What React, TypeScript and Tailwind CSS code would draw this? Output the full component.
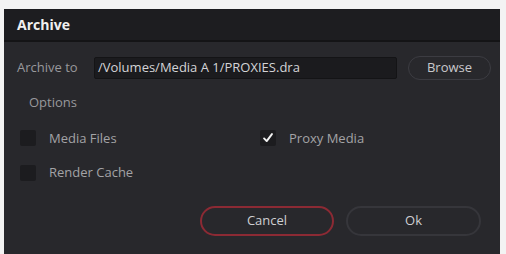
import { useState } from "react";

function Check({ checked, onChange, label }: { checked: boolean; onChange: () => void; label: string }) {
  return (
    <button type="button" onClick={onChange} className="flex items-center gap-[13px] text-[13px] text-[#a3a3a6]">
      <span className="flex h-[16px] w-[16px] items-center justify-center rounded-[2px] bg-[#1c1c1f]">
        {checked && (
          <svg viewBox="0 0 16 16" className="h-[14px] w-[14px]">
            <path d="M3.5 8.5 L6.5 11.5 L12.5 3.5" fill="none" stroke="#f2f2f2" strokeWidth="2.2" strokeLinecap="round" strokeLinejoin="round" />
          </svg>
        )}
      </span>
      <span>{label}</span>
    </button>
  );
}

export default function App() {
  const [media, setMedia] = useState(false);
  const [proxy, setProxy] = useState(true);
  const [cache, setCache] = useState(false);

  return (
    <div className="h-[254px] w-[506px] bg-[#f3f3f3] pl-[4px] pr-[6px] pt-[9px]" style={{ fontFamily: "'Open Sans', 'Noto Sans', sans-serif" }}>
      <div className="flex h-full flex-col bg-[#28282c]">
        {/* title bar */}
        <div className="flex h-[33px] items-center border-b-[2px] border-[#141416] bg-[#1d1d20] px-[13px]">
          <span className="text-[14px] font-bold text-[#f0f0f0]">Archive</span>
        </div>

        <div className="flex flex-1 flex-col pl-[13px] pr-[8px] pt-[14px]">
          <div className="flex items-center">
            <span className="w-[77px] shrink-0 text-[13px] text-[#98989c]">Archive to</span>
            <div className="flex h-[22px] w-[303px] shrink-0 items-center rounded-[2px] border border-[#141416] bg-[#1b1b1e] px-[3px] text-[13px] text-[#d4d4d6]">
              /Volumes/Media A 1/PROXIES.dra
            </div>
            <button type="button" className="ml-[11px] h-[24px] w-[83px] shrink-0 rounded-full border border-[#3c3c42] text-[13px] text-[#c8c8cc]">
              Browse
            </button>
          </div>

          <div className="mt-[13px] pl-[12px] text-[13px] text-[#98989c]">Options</div>

          <div className="mt-[16px] grid grid-cols-[240px_1fr] gap-y-[15px] pl-[3px]">
            <Check checked={media} onChange={() => setMedia(!media)} label="Media Files" />
            <Check checked={proxy} onChange={() => setProxy(!proxy)} label="Proxy Media" />
            <Check checked={cache} onChange={() => setCache(!cache)} label="Render Cache" />
          </div>

          <div className="mt-[23px] flex justify-end gap-[12px] pr-[11px]">
            <button type="button" className="h-[30px] w-[134px] rounded-full border-2 border-[#8c2a34] text-[13px] text-[#cfcfd2]">
              Cancel
            </button>
            <button type="button" className="h-[30px] w-[135px] rounded-full border-2 border-[#36363b] text-[13px] text-[#cfcfd2]">
              Ok
            </button>
          </div>
        </div>
      </div>
    </div>
  );
}
